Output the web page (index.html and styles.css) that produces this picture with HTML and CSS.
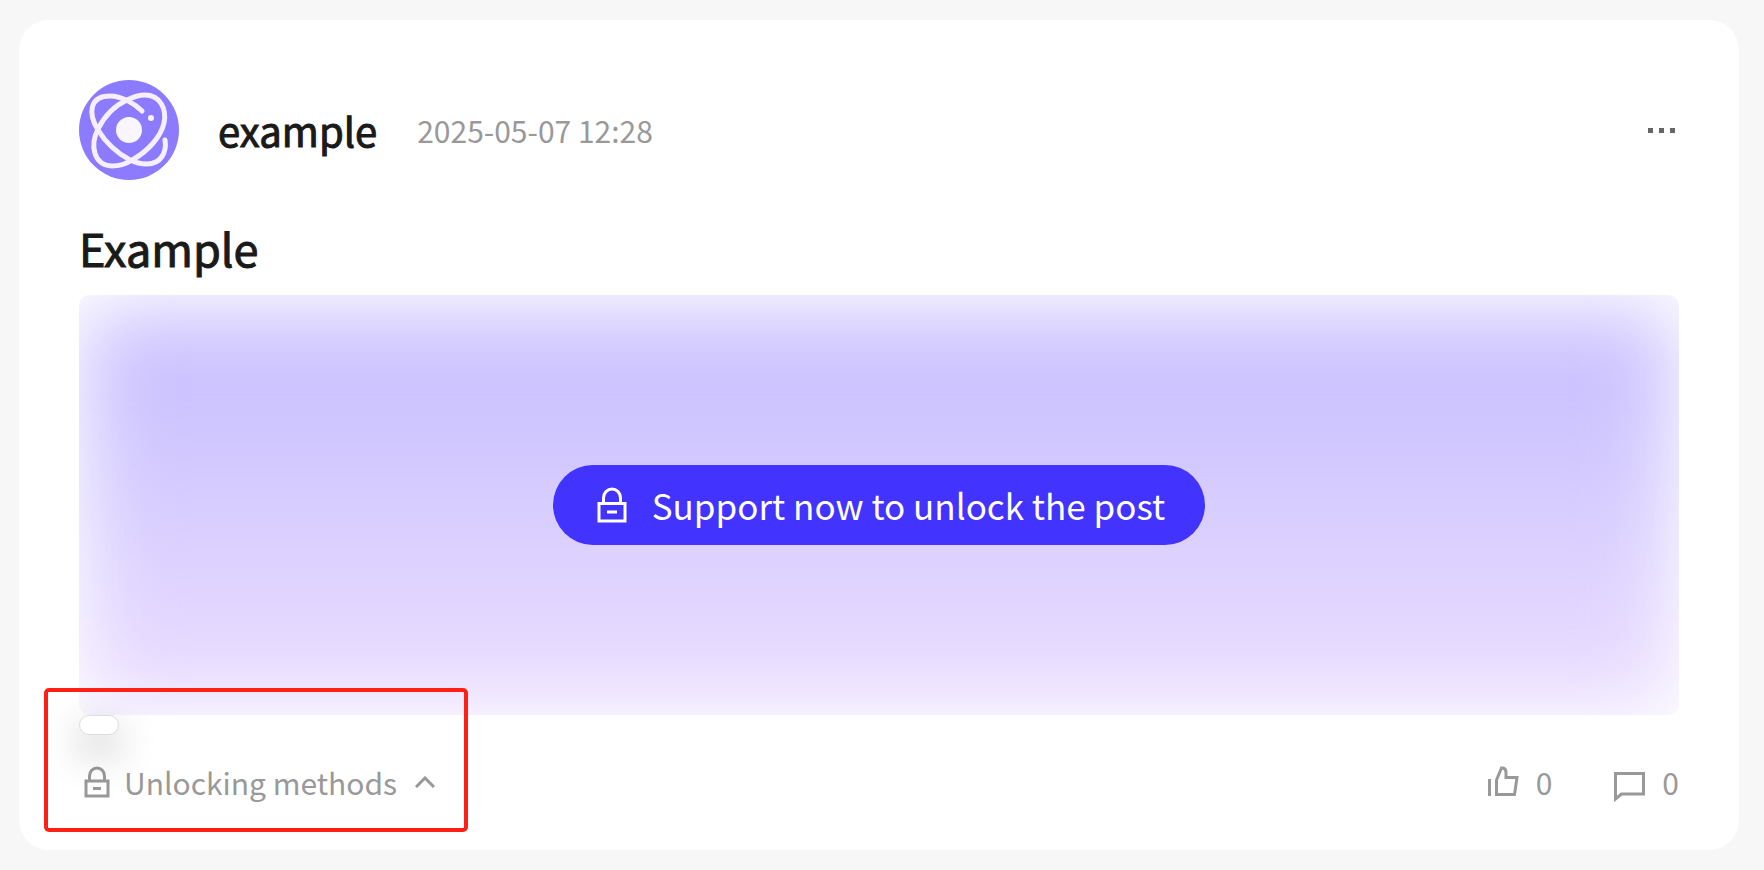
FILE: index.html
```html
<!DOCTYPE html>
<html lang="en">

<head>
    <meta charset="UTF-8">
    <meta name="viewport" content="width=device-width, initial-scale=1.0">
    <title>Example</title>
    <link rel="stylesheet" href="styles.css">
</head>

<body>
    <article class="post">
        <header class="post_head">
            <svg class="avatar" viewBox="0 0 100 100" aria-hidden="true">
                <circle cx="50" cy="50" r="50" fill="#8c7bff" />
                <g fill="none" stroke="#f5efff" stroke-width="5" stroke-linecap="round">
                    <path d="M63 31C56 24 43 16 31 16C10 16 9 34 19 50C27 63 38 73 51 80C57 83 62 84 68 84C82 84 88 72 86 60" />
                    <path d="M48 20C54 17 60 15 66 15C81 15 88 29 85 43C82 57 68 72 53 80C47 84 40 86 33 86C14 85 11 65 19 49C26 35 37 25 48 20Z" />
                </g>
                <circle cx="50" cy="50" r="13" fill="#faf6ff" />
                <circle cx="72" cy="38" r="3" fill="#faf6ff" />
            </svg>
            <span class="name">example</span>
            <time class="time" datetime="2025-05-07T12:28">2025-05-07 12:28</time>
            <button class="more" type="button" aria-label="More">
                <svg width="27" height="5" viewBox="0 0 27 5">
                    <path d="M0 0h5v5h-5zM11 0h5v5h-5zM22 0h5v5h-5z" fill="#666" />
                </svg>
            </button>
        </header>

        <h1 class="title">Example</h1>

        <div class="cover">
            <button class="unlock" type="button">
                <svg width="30" height="36" viewBox="0 0 30 36" fill="none" stroke="currentColor" stroke-width="3">
                    <path d="M2 16.500h26v17.500h-26zM6.500 16v-5a8.500 9 0 0 1 17 0v5M10 25h10" />
                </svg>
                <span>Support now to unlock the post</span>
            </button>
        </div>

        <footer class="post_foot">
            <div class="methods_wrap">
                <div class="popup"></div>
                <button class="methods" type="button">
                    <svg width="26" height="32" viewBox="0 0 26 32" fill="none" stroke="currentColor" stroke-width="3">
                        <path d="M2 15h22v15h-22zM5.500 15v-5a7.500 8 0 0 1 15 0v5M9 22.500h8" />
                    </svg>
                    <span>Unlocking methods</span>
                    <svg class="arrow" width="20" height="12" viewBox="0 0 20 12" fill="none" stroke="currentColor" stroke-width="3">
                        <path d="M1 11l9-9l9 9" />
                    </svg>
                </button>
            </div>
            <button class="count" type="button" aria-label="Like">
                <svg width="32" height="40" viewBox="0 0 32 40" fill="none" stroke="currentColor" stroke-width="3">
                    <path d="M1.500 17v17M8.500 32.500V18l5-12h1.500q3 1 3 4v5.500h11l-2.500 17z" />
                </svg>
                <span>0</span>
            </button>
            <button class="count" type="button" aria-label="Comment">
                <svg width="32" height="40" viewBox="0 0 32 40" fill="none" stroke="currentColor" stroke-width="3">
                    <path d="M1.500 11.500h28v20.500h-22l-6 5z" />
                </svg>
                <span>0</span>
            </button>
        </footer>
        <div class="mark"></div>
    </article>
</body>

</html>
```
FILE: styles.css
```css
* {
    margin: 0;
    padding: 0;
    box-sizing: border-box;
}

body {
    padding: 20px 25px 20px 19px;
    background-color: #f7f7f7;
    color: #1a1a1a;
    font-family: "Noto Sans CJK SC", sans-serif;
    font-size: 30px;
    line-height: 40px;
}

button {
    border: 0;
    background: none;
    color: inherit;
    font: inherit;
    cursor: pointer;
}

svg {
    display: block;
    flex: none;
}

.post {
    position: relative;
    padding: 60px 60px 48px;
    border-radius: 30px;
    background-color: #fff;
}

.post_head {
    display: flex;
    align-items: center;
}

.avatar {
    width: 100px;
    height: 100px;
}

.name {
    margin: 0 40px 0 39px;
    font-size: 40px;
    -webkit-text-stroke: 1px;
}

.time {
    color: #999;
}

.more {
    margin-left: auto;
    padding: 20px 4px;
}

.title {
    margin: 38px 0 17px;
    font-size: 45px;
    font-weight: 400;
    line-height: 60px;
    -webkit-text-stroke: 1px;
}

.cover {
    display: flex;
    align-items: center;
    justify-content: center;
    position: relative;
    height: 420px;
    border-radius: 10px;
    overflow: hidden;
}

.cover::before {
    content: "";
    position: absolute;
    inset: 16px 4px 4px;
    background: linear-gradient(#c8beff, #cdc4ff 24%, #ecdfff);
    filter: blur(40px);
}

.unlock {
    display: flex;
    align-items: center;
    position: relative;
    gap: 25px;
    height: 80px;
    padding: 0 40px 0 44px;
    border-radius: 40px;
    background-color: #4233ff;
    color: #fff;
    font-size: 35px;
}

.post_foot {
    display: flex;
    align-items: center;
    gap: 62px;
    padding-top: 47px;
    color: #999;
}

.methods_wrap {
    position: relative;
    margin-right: auto;
}

.methods {
    display: flex;
    align-items: center;
    gap: 14px;
    padding-left: 5px;
}

.arrow {
    margin-left: 4px;
}

/* empty dropdown, opens above the button */
.popup {
    position: absolute;
    left: 0;
    bottom: 67px;
    width: 40px;
    height: 20px;
    border: 1px solid #ddd;
    border-radius: 10px;
    background-color: #fff;
    box-shadow: 0 16px 40px rgba(0, 0, 0, .3);
}

.count {
    display: flex;
    align-items: center;
    gap: 16px;
}

.mark {
    position: absolute;
    left: 25px;
    bottom: 18px;
    width: 424px;
    height: 144px;
    border: 4px solid #ff2015;
    border-radius: 5px;
    pointer-events: none;
}
```
